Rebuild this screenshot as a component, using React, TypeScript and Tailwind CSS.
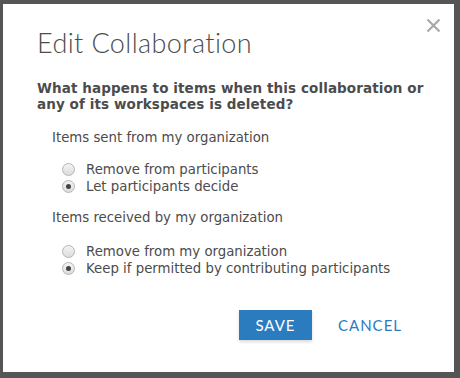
import React from "react";

const Radio: React.FC<{ checked?: boolean; label: string }> = ({ checked, label }) => {
  return (
    <label className="flex items-center h-[17px]">
      <span className="w-[13px] h-[13px] rounded-full border border-[#b5b5b5] bg-gradient-to-b from-[#f4f4f4] to-[#dcdcdc] flex items-center justify-center ml-[10px] mr-[11px]">
        {checked && <span className="w-[5px] h-[5px] rounded-full bg-[#444]" />}
      </span>
      <span>{label}</span>
    </label>
  );
};

const App: React.FC = () => {
  return (
    <div className="w-[460px] h-[378px] bg-[#555555] pt-[4px] pl-[3px] overflow-hidden">
      <div className="relative w-[451px] h-[368px] bg-white text-[#4c4c4c]">
        <button className="absolute top-[12px] right-[12px] w-[18px] h-[18px] flex items-center justify-center">
          <svg width="15" height="15" viewBox="0 0 15 15">
            <path d="M1.5 1.5 L13.5 13.5 M13.5 1.5 L1.5 13.5" stroke="#a9a9a9" strokeWidth="2.2" />
          </svg>
        </button>

        <div className="pl-[34px] pr-[30px] pt-[22px]">
          <h1 className="text-[27px] font-light leading-[34px] tracking-[0.4px] [font-family:Lato,'Open_Sans',sans-serif]">
            Edit Collaboration
          </h1>

          <p className="mt-[20px] text-[13.5px] font-bold leading-[16px] [font-family:'DejaVu_Sans',Verdana,sans-serif] tracking-[0.1px]">
            What happens to items when this collaboration or any of its workspaces is deleted?
          </p>

          <div className="pl-[15px] text-[13.3px] [font-family:'DejaVu_Sans',Verdana,sans-serif]">
            <div className="mt-[18px] leading-[16px]">Items sent from my organization</div>
            <div className="mt-[15px] flex flex-col">
              <Radio label="Remove from participants" />
              <Radio checked label="Let participants decide" />
            </div>

            <div className="mt-[15px] leading-[16px]">Items received by my organization</div>
            <div className="mt-[17px] flex flex-col">
              <Radio label="Remove from my organization" />
              <Radio checked label="Keep if permitted by contributing participants" />
            </div>
          </div>

          <div className="mt-[33px] flex items-center justify-end gap-[26px] pr-[22px] [font-family:Lato,sans-serif]">
            <button className="w-[73px] h-[30px] bg-[#2b7bbf] text-white text-[15px] tracking-[1px] shadow-[0_2px_3px_rgba(0,0,0,0.15)]">
              SAVE
            </button>
            <button className="text-[#2b7bbf] text-[15px] tracking-[1px]">CANCEL</button>
          </div>
        </div>
      </div>
    </div>
  );
};

export default App;
